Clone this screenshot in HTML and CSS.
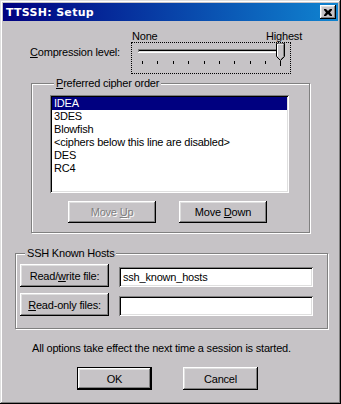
FILE: index.html
```html
<!DOCTYPE html>
<html lang="en">
<head>
  <meta charset="UTF-8">
  <title>TTSSH: Setup</title>
  <link rel="stylesheet" href="styles.css">
</head>
<body>

<div class="window">
  <div class="titlebar">
    <span class="title">TTSSH: Setup</span>
    <span class="close-btn">
      <svg width="8" height="7" viewBox="0 0 8 7">
        <path d="M0 0h2l2 2 2-2h2v1l-2 2.5 2 2.5v1h-2l-2-2-2 2h-2v-1l2-2.5-2-2.5z" fill="#000"/>
      </svg>
    </span>
  </div>

  <!-- Compression -->
  <div class="compress">
    <label class="compress-label"><u>C</u>ompression level:</label>
    <div class="scale">
      <div class="scale-ends">
        <span>None</span>
        <span>Highest</span>
      </div>
      <div class="slider">
        <svg width="158" height="30" viewBox="0 0 158 30">
          <!-- track -->
          <rect x="6" y="6" width="145" height="1" fill="#808080"/>
          <rect x="6" y="7" width="145" height="1" fill="#000"/>
          <rect x="6" y="8" width="145" height="1" fill="#dfdfdf"/>
          <rect x="6" y="9" width="146" height="1" fill="#fff"/>
          <rect x="6" y="6" width="1" height="3" fill="#808080"/>
          <!-- ticks -->
          <g fill="#000">
            <rect x="10" y="18" width="1" height="3"/>
            <rect x="25" y="18" width="1" height="3"/>
            <rect x="41" y="18" width="1" height="3"/>
            <rect x="56" y="18" width="1" height="3"/>
            <rect x="72" y="18" width="1" height="3"/>
            <rect x="87" y="18" width="1" height="3"/>
            <rect x="102" y="18" width="1" height="3"/>
            <rect x="118" y="18" width="1" height="3"/>
            <rect x="133" y="18" width="1" height="3"/>
            <rect x="148" y="18" width="1" height="5"/>
          </g>
          <!-- thumb -->
          <path d="M144.5 0.5h8v13l-4 4-4-4z" fill="#c6c3c6" stroke="#000"/>
          <path d="M145.5 13v-12h6" fill="none" stroke="#fff"/>
          <path d="M151.5 1.5v12l-3 3" fill="none" stroke="#808080"/>
        </svg>
      </div>
    </div>
  </div>

  <!-- Cipher order -->
  <fieldset class="group cipher">
    <legend><u>P</u>referred cipher order</legend>
    <ul class="listbox">
      <li class="selected">IDEA</li>
      <li>3DES</li>
      <li>Blowfish</li>
      <li>&lt;ciphers below this line are disabled&gt;</li>
      <li>DES</li>
      <li>RC4</li>
    </ul>
    <div class="move-row">
      <button class="btn move-btn" disabled>Move <u>U</u>p</button>
      <button class="btn move-btn">Move <u>D</u>own</button>
    </div>
  </fieldset>

  <!-- Known hosts -->
  <fieldset class="group hosts">
    <legend>SSH Known Hosts</legend>
    <div class="file-row">
      <button class="btn file-btn">Read/<u>w</u>rite file:</button>
      <input class="edit" type="text" value="ssh_known_hosts">
    </div>
    <div class="file-row">
      <button class="btn file-btn"><u>R</u>ead-only files:</button>
      <input class="edit" type="text" value="">
    </div>
  </fieldset>

  <p class="note">All options take effect the next time a session is started.</p>

  <div class="dialog-buttons">
    <button class="btn dlg-btn default">OK</button>
    <button class="btn dlg-btn">Cancel</button>
  </div>
</div>

</body>
</html>
```

FILE: styles.css
```css
/* Global styles */
body {
  margin: 0;
  padding: 0;
  font-family: 'Liberation Sans', Arial, sans-serif;
  font-size: 11px;
  letter-spacing: -0.2px;
  color: #000;
  background: #c6c3c6;
}

.window {
  width: 341px;
  height: 404px;
  box-sizing: border-box;
  padding: 3px;
  background: #c6c3c6;
  box-shadow: inset -1px -1px #000, inset 1px 1px #dfdfdf,
              inset -2px -2px #808080, inset 2px 2px #fff;
}

/* Title bar */
.titlebar {
  height: 18px;
  display: flex;
  align-items: center;
  justify-content: space-between;
  padding: 0 2px 0 3px;
  background: linear-gradient(to right, #000080, #1084d0);
}

.title {
  font-family: 'DejaVu Sans', sans-serif;
  font-weight: bold;
  font-size: 11px;
  letter-spacing: 0.3px;
  color: #fff;
}

.close-btn {
  width: 16px;
  height: 14px;
  display: flex;
  align-items: center;
  justify-content: center;
  background: #c6c3c6;
  box-shadow: inset -1px -1px #000, inset 1px 1px #fff,
              inset -2px -2px #808080, inset 2px 2px #dfdfdf;
}

/* Compression slider */
.compress {
  display: flex;
  margin-top: 9px;
  padding-left: 27px;
}

.compress-label {
  width: 101px;
  margin-top: 16px;
  line-height: 13px;
}

.scale {
  width: 171px;
}

.scale-ends {
  display: flex;
  justify-content: space-between;
  height: 12px;
  line-height: 12px;
  padding-left: 1px;
}

.slider {
  width: 160px;
  height: 32px;
  box-sizing: border-box;
  border: 1px dotted #000;
}

.slider svg {
  display: block;
}

/* Group boxes */
.group {
  margin: 0;
  padding: 0;
  border: 1px solid #808080;
  box-shadow: inset 1px 1px #fff, 1px 1px #fff;
  box-sizing: border-box;
}

.group legend {
  padding: 0 2px;
  margin-left: 4px;
  line-height: 13px;
  background: #c6c3c6;
}

.cipher {
  width: 279px;
  margin: 3px 0 0 28px;
  padding: 5px 0 9px 18px;
}

.listbox {
  list-style: none;
  width: 239px;
  height: 98px;
  margin: 0;
  padding: 2px;
  box-sizing: border-box;
  background: #fff;
  box-shadow: inset 1px 1px #808080, inset -1px -1px #fff,
              inset 2px 2px #000, inset -2px -2px #dfdfdf;
}

.listbox li {
  height: 13px;
  line-height: 13px;
  padding-left: 2px;
  white-space: nowrap;
}

.listbox li.selected {
  background: #000080;
  color: #fff;
}

.move-row {
  display: flex;
  gap: 23px;
  margin: 8px 0 0 18px;
}

/* Buttons */
.btn {
  font-family: inherit;
  font-size: 11px;
  letter-spacing: -0.2px;
  color: #000;
  margin: 0;
  padding: 0;
  border: none;
  background: #c6c3c6;
  box-shadow: inset -1px -1px #000, inset 1px 1px #fff,
              inset -2px -2px #808080, inset 2px 2px #dfdfdf;
}

.btn:disabled {
  color: #808080;
  text-shadow: 1px 1px #fff;
}

.move-btn {
  width: 88px;
  height: 22px;
}

.hosts {
  width: 313px;
  margin: 14px 0 0 12px;
  padding: 4px 0 12px 4px;
}

.hosts legend {
  margin-left: 5px;
}

.file-row {
  display: flex;
  align-items: flex-start;
  gap: 10px;
}

.file-row + .file-row {
  margin-top: 6px;
}

.file-btn {
  width: 89px;
  height: 23px;
}

.edit {
  width: 194px;
  height: 20px;
  margin-top: 3px;
  padding: 0 4px;
  box-sizing: border-box;
  border: none;
  outline: none;
  font-family: inherit;
  font-size: 11px;
  letter-spacing: -0.2px;
  background: #fff;
  box-shadow: inset 1px 1px #808080, inset -1px -1px #fff,
              inset 2px 2px #000, inset -2px -2px #dfdfdf;
}

.note {
  margin: 13px 0 0 29px;
  line-height: 13px;
}

.dialog-buttons {
  display: flex;
  gap: 31px;
  margin: 12px 0 0 74px;
}

.dlg-btn {
  width: 75px;
  height: 23px;
}

.dlg-btn.default {
  box-shadow: inset 0 0 0 1px #000, inset -2px -2px #000, inset 2px 2px #fff,
              inset -3px -3px #808080, inset 3px 3px #dfdfdf;
}
```
